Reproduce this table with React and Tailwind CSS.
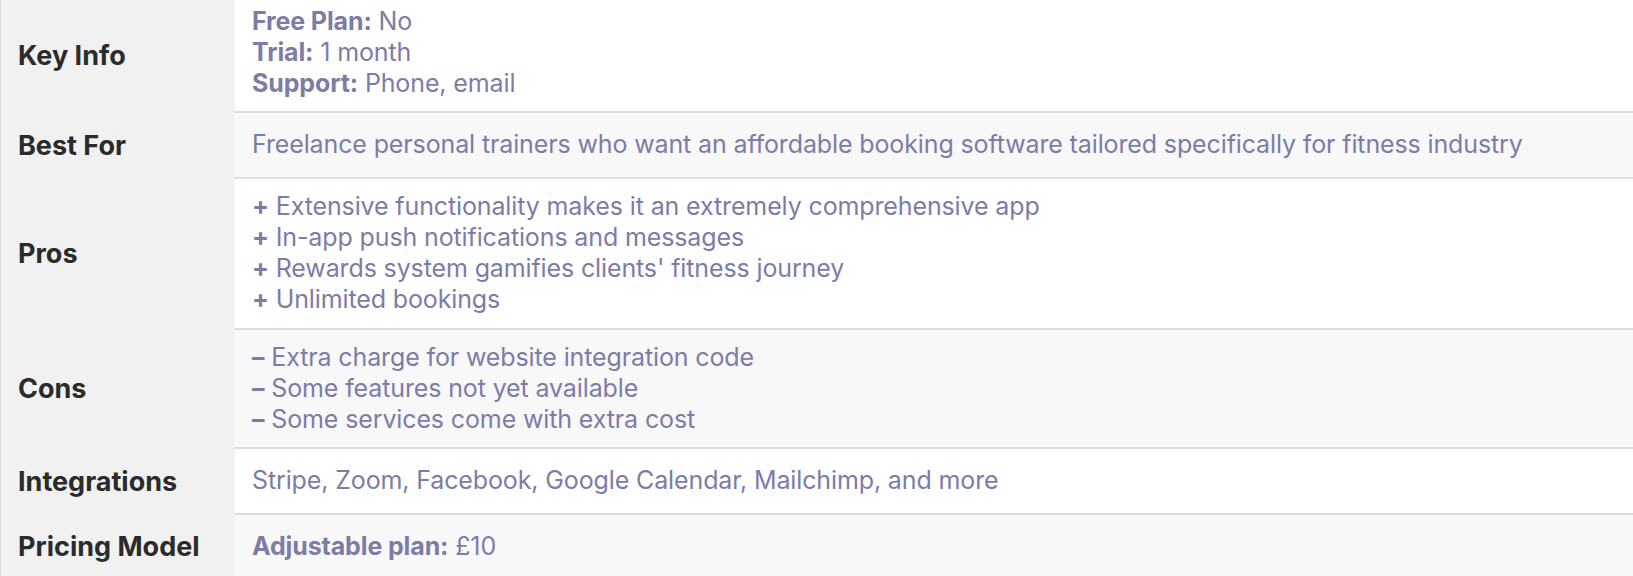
import React from "react";

const B = ({ children }) => <span className="font-bold">{children}</span>;

const rows = [
  {
    label: "Key Info",
    bg: "bg-white",
    pad: "pt-[6px] pb-3",
    content: (
      <>
        <div><B>Free Plan:</B> No</div>
        <div><B>Trial:</B> 1 month</div>
        <div><B>Support:</B> Phone, email</div>
      </>
    ),
  },
  {
    label: "Best For",
    bg: "bg-[#f8f8f8]",
    pad: "pt-4 pb-[17px]",
    content: (
      <div>Freelance personal trainers who want an affordable booking software tailored specifically for fitness industry</div>
    ),
  },
  {
    label: "Pros",
    bg: "bg-white",
    pad: "pt-3 pb-[13px]",
    content: (
      <>
        <div><B>+</B> Extensive functionality makes it an extremely comprehensive app</div>
        <div><B>+</B> In-app push notifications and messages</div>
        <div><B>+</B> Rewards system gamifies clients' fitness journey</div>
        <div><B>+</B> Unlimited bookings</div>
      </>
    ),
  },
  {
    label: "Cons",
    bg: "bg-[#f8f8f8]",
    pad: "py-3",
    content: (
      <>
        <div><B>–</B> Extra charge for website integration code</div>
        <div><B>–</B> Some features not yet available</div>
        <div><B>–</B> Some services come with extra cost</div>
      </>
    ),
  },
  {
    label: "Integrations",
    bg: "bg-white",
    pad: "pt-4 pb-[17px]",
    content: <div>Stripe, Zoom, Facebook, Google Calendar, Mailchimp, and more</div>,
  },
  {
    label: "Pricing Model",
    bg: "bg-[#f8f8f8]",
    pad: "pt-4 pb-[17px]",
    content: (
      <div><B>Adjustable plan:</B> £10</div>
    ),
  },
];

export default function App() {
  return (
    <div
      className="w-[1633px] h-[576px] overflow-hidden bg-white"
      style={{ fontFamily: "Inter, 'Noto Sans', sans-serif" }}
    >
      <div className="flex flex-col border-l border-[#dddddd]">
        {rows.map((r, i) => (
          <div key={r.label} className="flex">
            <div className="w-[234px] shrink-0 bg-[#f1f1f1] flex items-center pl-[17px] text-[27px] font-bold text-[#2b2b2b]">
              {r.label}
            </div>
            <div
              className={`flex-1 ${r.bg} ${r.pad} pl-[17px] text-[25px] leading-[31px] text-[#7c7ca7] tracking-[-0.005em] ${i < rows.length - 1 ? "border-b-2 border-[#dddddd]" : ""}`}
            >
              {r.content}
            </div>
          </div>
        ))}
      </div>
    </div>
  );
}
